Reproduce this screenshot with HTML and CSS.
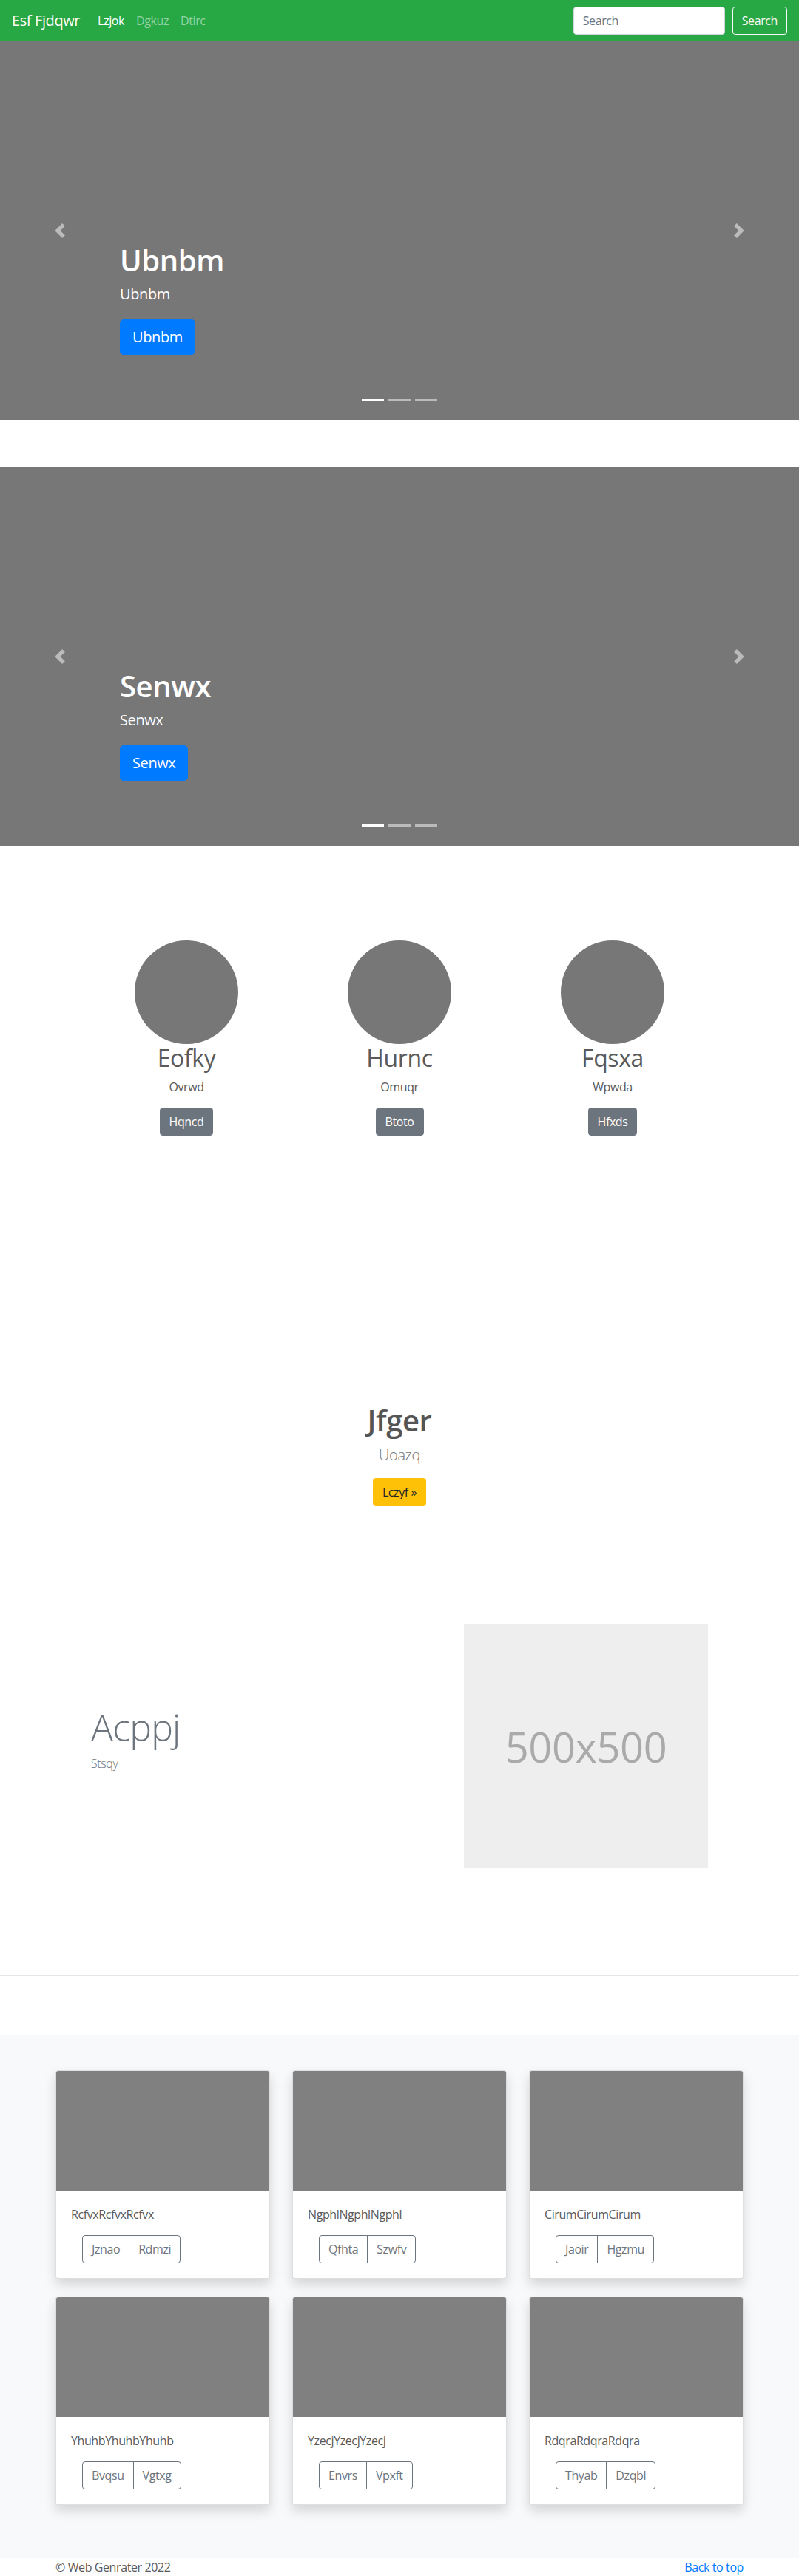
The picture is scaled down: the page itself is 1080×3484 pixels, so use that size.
FILE: index.html
```html
<!DOCTYPE html>
<html lang="en">
<head>
<meta charset="utf-8">
<title>Esf Fjdqwr</title>
<link rel="stylesheet" href="styles.css">
</head>
<body>
<nav class="navbar">
  <a class="brand" href="#">Esf Fjdqwr</a>
  <ul class="nav-links">
    <li><a class="nav-link active" href="#">Lzjok</a></li>
    <li><a class="nav-link" href="#">Dgkuz</a></li>
    <li><a class="nav-link" href="#">Dtirc</a></li>
  </ul>
  <form class="search">
    <input class="search-input" type="text" placeholder="Search">
    <button class="btn-search" type="button">Search</button>
  </form>
</nav>

<div class="carousel">
  <div class="caption">
    <h1>Ubnbm</h1>
    <p class="caption-text">Ubnbm</p>
    <p class="caption-action"><a class="btn btn-lg btn-primary" href="#">Ubnbm</a></p>
  </div>
  <ol class="indicators"><li class="active"></li><li></li><li></li></ol>
  <a class="control prev" href="#"><svg viewBox="0 0 8 8"><path fill="#fff" d="M5.25 0l-4 4 4 4 1.5-1.5L4.25 4l2.5-2.5L5.25 0z"/></svg></a>
  <a class="control next" href="#"><svg viewBox="0 0 8 8"><path fill="#fff" d="M2.75 0l-1.5 1.5L3.75 4l-2.5 2.5L2.75 8l4-4-4-4z"/></svg></a>
</div>

<div class="carousel">
  <div class="caption">
    <h1>Senwx</h1>
    <p class="caption-text">Senwx</p>
    <p class="caption-action"><a class="btn btn-lg btn-primary" href="#">Senwx</a></p>
  </div>
  <ol class="indicators"><li class="active"></li><li></li><li></li></ol>
  <a class="control prev" href="#"><svg viewBox="0 0 8 8"><path fill="#fff" d="M5.25 0l-4 4 4 4 1.5-1.5L4.25 4l2.5-2.5L5.25 0z"/></svg></a>
  <a class="control next" href="#"><svg viewBox="0 0 8 8"><path fill="#fff" d="M2.75 0l-1.5 1.5L3.75 4l-2.5 2.5L2.75 8l4-4-4-4z"/></svg></a>
</div>

<section class="marketing">
  <div class="marketing-row">
    <div class="feature">
      <div class="avatar"></div>
      <h2>Eofky</h2>
      <p>Ovrwd</p>
      <p class="feature-action"><a class="btn btn-secondary" href="#">Hqncd</a></p>
    </div>
    <div class="feature">
      <div class="avatar"></div>
      <h2>Hurnc</h2>
      <p>Omuqr</p>
      <p class="feature-action"><a class="btn btn-secondary" href="#">Btoto</a></p>
    </div>
    <div class="feature">
      <div class="avatar"></div>
      <h2>Fqsxa</h2>
      <p>Wpwda</p>
      <p class="feature-action"><a class="btn btn-secondary" href="#">Hfxds</a></p>
    </div>
  </div>
</section>

<hr class="divider">

<section class="hero">
  <h1>Jfger</h1>
  <p class="lead">Uoazq</p>
  <p class="hero-action"><a class="btn btn-warning" href="#">Lczyf &raquo;</a></p>
</section>

<section class="featurette">
  <div class="featurette-row">
    <div class="featurette-text">
      <h2 class="featurette-heading">Acppj</h2>
      <p class="featurette-sub">Stsqy</p>
    </div>
    <div class="featurette-media">
      <div class="placeholder">500x500</div>
    </div>
  </div>
</section>

<hr class="divider">

<section class="album">
  <div class="container">
    <div class="card-grid">
      <div class="card">
        <div class="card-img"></div>
        <div class="card-body">
          <p class="card-text">RcfvxRcfvxRcfvx</p>
          <div class="btn-group"><a class="btn btn-outline" href="#">Jznao</a><a class="btn btn-outline" href="#">Rdmzi</a></div>
        </div>
      </div>
      <div class="card">
        <div class="card-img"></div>
        <div class="card-body">
          <p class="card-text">NgphlNgphlNgphl</p>
          <div class="btn-group"><a class="btn btn-outline" href="#">Qfhta</a><a class="btn btn-outline" href="#">Szwfv</a></div>
        </div>
      </div>
      <div class="card">
        <div class="card-img"></div>
        <div class="card-body">
          <p class="card-text">CirumCirumCirum</p>
          <div class="btn-group"><a class="btn btn-outline" href="#">Jaoir</a><a class="btn btn-outline" href="#">Hgzmu</a></div>
        </div>
      </div>
      <div class="card">
        <div class="card-img"></div>
        <div class="card-body">
          <p class="card-text">YhuhbYhuhbYhuhb</p>
          <div class="btn-group"><a class="btn btn-outline" href="#">Bvqsu</a><a class="btn btn-outline" href="#">Vgtxg</a></div>
        </div>
      </div>
      <div class="card">
        <div class="card-img"></div>
        <div class="card-body">
          <p class="card-text">YzecjYzecjYzecj</p>
          <div class="btn-group"><a class="btn btn-outline" href="#">Envrs</a><a class="btn btn-outline" href="#">Vpxft</a></div>
        </div>
      </div>
      <div class="card">
        <div class="card-img"></div>
        <div class="card-body">
          <p class="card-text">RdqraRdqraRdqra</p>
          <div class="btn-group"><a class="btn btn-outline" href="#">Thyab</a><a class="btn btn-outline" href="#">Dzqbl</a></div>
        </div>
      </div>
    </div>
  </div>
</section>

<footer class="footer">
  <div class="container">
    <p class="back-top"><a href="#">Back to top</a></p>
    <p>&copy; Web Genrater 2022</p>
  </div>
</footer>
</body>
</html>
```

FILE: styles.css
```css
* { box-sizing: border-box; }

body {
  margin: 0;
  font-family: "Open Sans", "Noto Sans", sans-serif;
  font-size: 16px;
  line-height: 1.5;
  letter-spacing: -0.025em;
  color: #5a5a5a;
  background: #fff;
}

a { text-decoration: none; }

/* Navbar */
.navbar {
  display: flex;
  align-items: center;
  height: 56px;
  padding: 8px 16px;
  background: #28a745;
}
.brand {
  font-size: 20px;
  line-height: 30px;
  color: #fff;
  margin-right: 16px;
}
.nav-links {
  display: flex;
  list-style: none;
  margin: 0;
  padding: 0;
}
.nav-link {
  display: block;
  padding: 8px;
  color: rgba(255, 255, 255, .5);
}
.nav-link.active { color: #fff; }
.search {
  display: flex;
  margin: 0 0 0 auto;
}
.search-input {
  width: 205px;
  height: 38px;
  padding: 6px 12px;
  font: inherit;
  letter-spacing: inherit;
  color: #495057;
  background: #fff;
  border: 1px solid #ced4da;
  border-radius: 4px;
  margin-right: 10px;
}
.search-input::placeholder { color: #6c757d; }
.btn-search {
  height: 38px;
  padding: 6px 12px;
  font: inherit;
  letter-spacing: inherit;
  color: #f8f9fa;
  background: transparent;
  border: 1px solid #f8f9fa;
  border-radius: 4px;
}

/* Buttons */
.btn {
  display: inline-block;
  font-size: 16px;
  line-height: 1.5;
  padding: 6px 12px;
  border: 1px solid transparent;
  border-radius: 4px;
  text-align: center;
}
.btn-lg {
  font-size: 20px;
  padding: 8px 16px;
  border-radius: 5px;
}
.btn-primary { background: #007bff; border-color: #007bff; color: #fff; }
.btn-secondary { background: #6c757d; border-color: #6c757d; color: #fff; }
.btn-warning { background: #ffc107; border-color: #ffc107; color: #212529; }
.btn-outline { background: transparent; border-color: #6c757d; color: #6c757d; }

/* Carousel */
.carousel {
  position: relative;
  height: 512px;
  margin-bottom: 64px;
  background: #777;
  overflow: hidden;
}
.caption {
  position: absolute;
  left: 15%;
  right: 15%;
  bottom: 48px;
  z-index: 10;
  padding: 20px 0;
  color: #fff;
}
.caption h1 {
  font-size: 40px;
  line-height: 1.2;
  font-weight: 600;
  margin: 0 0 8px;
}
.caption-text {
  font-size: 20px;
  line-height: 1.4;
  margin: 0 0 20px;
}
.caption-action {
  display: flex;
  margin: 0 0 20px;
}
.control {
  position: absolute;
  top: 0;
  bottom: 0;
  width: 15%;
  display: flex;
  align-items: center;
  justify-content: center;
  opacity: .5;
}
.control.prev { left: 0; }
.control.next { right: 0; }
.control svg { width: 20px; height: 20px; display: block; }
.indicators {
  position: absolute;
  left: 15%;
  right: 15%;
  bottom: 0;
  margin: 0 0 16px;
  padding: 0;
  list-style: none;
  display: flex;
  justify-content: center;
}
.indicators li {
  box-sizing: content-box;
  width: 30px;
  height: 3px;
  margin: 0 3px;
  background: #fff;
  background-clip: padding-box;
  border-top: 10px solid transparent;
  border-bottom: 10px solid transparent;
  opacity: .5;
}
.indicators li.active { opacity: 1; }

/* Marketing */
.marketing { padding: 64px 0; }
.marketing-row {
  width: 864px;
  margin: 0 auto;
  display: grid;
  grid-template-columns: repeat(3, 1fr);
}
.feature {
  padding: 0 15px;
  margin-bottom: 24px;
  text-align: center;
}
.avatar {
  width: 140px;
  height: 140px;
  border-radius: 50%;
  background: #777;
  margin: 0 auto;
}
.feature h2 {
  font-size: 32px;
  font-weight: 400;
  line-height: 1.2;
  margin: 0 0 8px;
}
.feature p { margin: 0 12px 16px; }
.feature .feature-action {
  display: flex;
  justify-content: center;
}

.divider {
  margin: 80px 0;
  height: 0;
  border: 0;
  border-top: 1px solid rgba(0, 0, 0, .1);
}

/* Hero */
.hero {
  padding: 96px 0 80px;
  text-align: center;
}
.hero h1 {
  font-size: 40px;
  line-height: 1.2;
  font-weight: 600;
  margin: 0 0 8px;
  color: #555;
}
.lead {
  font-size: 20px;
  font-weight: 300;
  line-height: 1.5;
  color: #6c757d;
  margin: 0 0 16px;
}
.hero-action {
  display: flex;
  justify-content: center;
  margin: 0 0 16px;
}

/* Featurette */
.featurette { padding: 64px 0; }
.featurette-row {
  width: 864px;
  margin: 0 auto;
  display: grid;
  grid-template-columns: 7fr 5fr;
  align-items: center;
}
.featurette-text,
.featurette-media { padding: 0 15px; }
.featurette-heading {
  font-size: 50px;
  font-weight: 300;
  line-height: 1;
  letter-spacing: -.8px;
  color: #6c757d;
  margin: 0 0 12px;
}
.featurette-sub {
  font-weight: 300;
  color: #6c757d;
  margin: 0 0 16px;
}
.placeholder {
  width: 330px;
  height: 330px;
  background: #eee;
  color: #aaa;
  font-size: 56px;
  display: flex;
  align-items: center;
  justify-content: center;
}

/* Album */
.album {
  background: #f8f9fa;
  padding: 48px 0;
}
.container {
  width: 960px;
  margin: 0 auto;
  padding: 0 15px;
}
.card-grid {
  display: grid;
  grid-template-columns: repeat(3, 1fr);
  column-gap: 30px;
}
.card {
  background: #fff;
  border: 1px solid rgba(0, 0, 0, .125);
  border-radius: 4px;
  box-shadow: 0 8px 16px rgba(0, 0, 0, .15);
  margin-bottom: 24px;
  overflow: hidden;
}
.card-img {
  height: 162px;
  background: #808080;
}
.card-body { padding: 20px; }
.card-text { margin: 0 0 16px; }
.btn-group {
  display: inline-flex;
  margin-left: 15px;
}
.btn-group .btn:first-child { border-radius: 4px 0 0 4px; }
.btn-group .btn:last-child { border-radius: 0 4px 4px 0; margin-left: -1px; }

/* Footer */
.footer { padding-bottom: 32px; }
.footer p { margin: 0 0 16px; }
.back-top { float: right; }
.back-top a { color: #007bff; }
```
